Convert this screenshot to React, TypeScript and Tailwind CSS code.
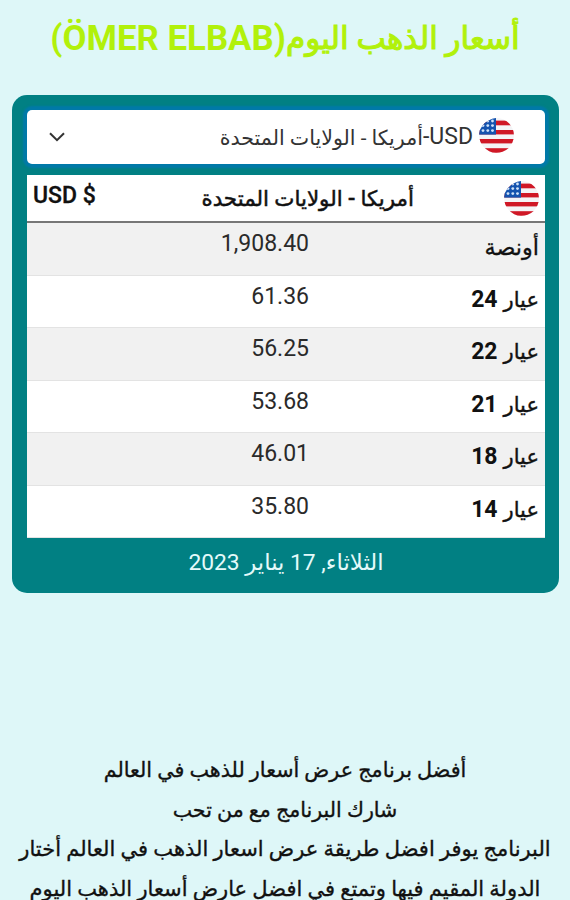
import React from "react";

const AR = "font-['Roboto','DejaVu_Sans',sans-serif]";

function Flag({ id }: { id: string }) {
  return (
    <svg width="35" height="35" viewBox="0 0 35 35" className="block shrink-0">
      <defs>
        <clipPath id={id}>
          <path d="M17 0H18A17.4 17.4 0 1 1 0.2 16.5Q0 12 3.5 7.5Q9 1 17 0Z" />
        </clipPath>
      </defs>
      <g clipPath={`url(#${id})`}>
        <rect width="35" height="35" fill="#f4f4f6" />
        <g fill="#d01826">
          <rect y="2.6" width="35" height="4.7" />
          <rect y="12" width="35" height="4.4" />
          <rect y="21" width="35" height="4.4" />
          <rect y="30.2" width="35" height="4.8" />
        </g>
        <rect width="17" height="16.6" fill="#1553ae" />
        <g fill="#cfe2f7">
          {[3, 7.6, 12.6].map((y) =>
            [4, 8.8, 13.5].map((x) => <circle key={`${x}-${y}`} cx={x} cy={y} r="1.4" />)
          )}
        </g>
      </g>
    </svg>
  );
}

const rows = [
  { label: "أونصة", karat: "", price: "1,908.40" },
  { label: "عيار", karat: "24", price: "61.36" },
  { label: "عيار", karat: "22", price: "56.25" },
  { label: "عيار", karat: "21", price: "53.68" },
  { label: "عيار", karat: "18", price: "46.01" },
  { label: "عيار", karat: "14", price: "35.80" },
];

export default function App() {
  return (
    <div dir="rtl" className={`h-[900px] w-[570px] overflow-hidden bg-[#def7f8] text-[#111] ${AR}`}>
      <h1 className="flex h-[95px] items-start justify-center whitespace-nowrap pt-[16px] text-[34.8px] font-bold leading-[42px] text-[#b1f10b]">
        <span className="pt-[2px] text-[31.1px] font-normal [-webkit-text-stroke:1.1px_#b1f10b]">أسعار الذهب اليوم</span>
        <span dir="ltr" className="pt-[1px]">(ÖMER ELBAB)</span>
      </h1>
      <main className="mr-[11px] h-[498px] w-[547px] rounded-[15px] bg-[#018083] pt-[15px] pr-[14px] pl-[15px]">
        <div className="flex h-[54px] items-center rounded-[5px] bg-white pr-[31px] pl-[22px] text-[23px] text-[#333] shadow-[0_0_2px_4px_#0079a8]">
          <div className="-mt-[3px]">
            <Flag id="flag-select" />
          </div>
          <span dir="ltr" className="mr-[6px] whitespace-nowrap">-USD</span>
          <span className="pt-[2px] whitespace-nowrap text-[20.6px]">أمريكا - الولايات المتحدة</span>
          <svg width="16" height="10" viewBox="0 0 16 10" className="mr-auto" fill="none" stroke="#333" strokeWidth="2">
            <path d="M1 1.2 8 8.2 15 1.2" />
          </svg>
        </div>
        <section className="mt-[11px] h-[363px] bg-white">
          <header className="flex h-[48px] items-center border-b-2 border-[#777] pr-[6px] pl-[6px] font-medium">
            <Flag id="flag-table" />
            <span className="mr-[90px] pt-[2px] whitespace-nowrap text-[21.4px] [-webkit-text-stroke:0.5px_#111]">أمريكا - الولايات المتحدة</span>
            <span dir="ltr" className="mr-auto -mt-[4px] text-[23px] [-webkit-text-stroke:0.3px_#111]">USD $</span>
          </header>
          {rows.map((r) => (
            <div key={r.price} className="flex h-[52.5px] items-start justify-between border-b border-[#e3e3e3] pr-[6px] pl-[181px] odd:bg-white even:bg-[#f1f1f1]">
              <span className="flex gap-[6px] pt-[10px] text-[21px] leading-[28px]">
                <span className={r.karat ? "[-webkit-text-stroke:0.4px_#111]" : "text-[22.3px] [-webkit-text-stroke:0.3px_#111]"}>{r.label}</span>
                <b className="text-[23px] font-bold">{r.karat}</b>
              </span>
              <span dir="ltr" className="w-[101px] pt-[7px] text-right text-[23px] leading-[28px] text-[#2a2a2a]">{r.price}</span>
            </div>
          ))}
        </section>
        <p className="pt-[11px] text-center text-[22.8px] leading-[28px] text-[#e4fafa]">الثلاثاء, 17 يناير 2023</p>
      </main>
      <footer className="pt-[158px] text-center leading-[39.5px] whitespace-nowrap [-webkit-text-stroke:0.35px_#111]">
        <p className="text-[20.7px]">أفضل برنامج عرض أسعار للذهب في العالم</p>
        <p className="text-[20.6px]">شارك البرنامج مع من تحب</p>
        <p className="text-[21px]">البرنامج يوفر افضل طريقة عرض اسعار الذهب في العالم أختار</p>
        <p className="text-[21px]">الدولة المقيم فيها وتمتع في افضل عارض أسعار الذهب اليوم</p>
      </footer>
    </div>
  );
}
